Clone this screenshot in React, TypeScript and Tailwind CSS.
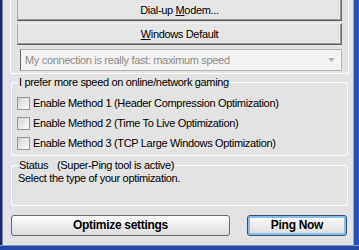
import { useState } from "react";

const methods = [
  "Enable Method 1 (Header Compression Optimization)",
  "Enable Method 2 (Time To Live Optimization)",
  "Enable Method 3 (TCP Large Windows Optimization)",
];

const bg = "bg-[#e3e3e3]";

function ClassicButton({ children, className }: { children: React.ReactNode; className?: string }) {
  return (
    <div
      className={`h-[22px] flex items-center justify-center bg-[#e6e6e6] border border-t-[#f4f4f4] border-l-[#a8a8a8] border-r-[#6c6c6c] border-b-[#5c5c5c] shadow-[inset_-1px_-1px_0_#9a9a9a] ${className ?? ""}`}
    >
      {children}
    </div>
  );
}

function CheckRow({ label, checked, onToggle }: { label: string; checked: boolean; onToggle: () => void }) {
  return (
    <div className="flex items-center h-[13px] cursor-default" onClick={onToggle}>
      <div className="w-[13px] h-[13px] border border-[#969696] bg-gradient-to-br from-[#d6d6d6] to-[#fbfbfb] flex items-center justify-center">
        {checked && (
          <svg width="9" height="9" viewBox="0 0 9 9">
            <path d="M1 4 L3.5 6.5 L8 1.5" stroke="#21a121" strokeWidth="2" fill="none" />
          </svg>
        )}
      </div>
      <span className="ml-[3px] leading-[13px]">{label}</span>
    </div>
  );
}

export default function App() {
  const [checks, setChecks] = useState([false, false, false]);

  function toggle(i: number) {
    setChecks((c) => c.map((v, j) => (j == i ? !v : v)));
  }

  return (
    <div
      className={`w-[359px] h-[250px] overflow-hidden flex flex-col ${bg} text-black font-['Liberation_Sans',Arial,sans-serif] text-[11px] tracking-[-0.33px] leading-[13px]`}
    >
      <div className="flex-1 flex">
        {/* left window frame */}
        <div className="w-[3px] border-l-2 border-[#1c2866] bg-[#7f8ab4]" />

        <div className="flex-1 flex flex-col">
          {/* connection type box */}
          <div className="-mt-[1px] ml-[7px] w-[339px] border-x border-b border-white rounded-b-[3px] px-[6px] pb-[2px] flex flex-col">
            <ClassicButton>
              <span>
                Dial-up <span className="underline underline-offset-1">M</span>odem...
              </span>
            </ClassicButton>
            <ClassicButton className="mt-[2px]">
              <span>
                <span className="underline underline-offset-1">W</span>indows Default
              </span>
            </ClassicButton>
            <div className="mt-[4px] ml-[3px] h-[22px] border border-[#b4b4b4] border-l-[#6a6a6a] bg-[#f3f3f3] flex items-center pl-[4px] pr-[6px]">
              <span className="flex-1 text-[#8c8c8c]">My connection is really fast: maximum speed</span>
              <svg width="7" height="4" viewBox="0 0 7 4">
                <path d="M0 0 H7 L3.5 4 Z" fill="#b4b4b4" />
              </svg>
            </div>
          </div>

          {/* methods group */}
          <div className="mt-[8px] ml-[8px] w-[337px] border border-white rounded-[3px] pl-[5px] pb-[5px]">
            <div className={`-mt-[7px] ml-[1px] px-[1px] w-fit ${bg}`}>I prefer more speed on online/network gaming</div>
            <div className="mt-[8px] flex flex-col gap-[7px]">
              {methods.map((m, i) => (
                <CheckRow key={i} label={m} checked={checks[i]} onToggle={() => toggle(i)} />
              ))}
            </div>
          </div>

          {/* status group */}
          <div className="mt-[9px] ml-[8px] w-[337px] border border-white rounded-[3px] pl-[6px] pb-[20px]">
            <div className={`-mt-[7px] px-[1px] w-fit flex ${bg}`}>
              <span className="w-[38px]">Status</span>
              <span>(Super-Ping tool is active)</span>
            </div>
            <div>Select the type of your optimization.</div>
          </div>

          {/* bottom buttons */}
          <div className="mt-[9px] ml-[8px] flex gap-[17px] font-bold text-[12px] tracking-[-0.3px]">
            <div className="w-[219px] h-[21px] rounded-[3px] border border-[#6a6a6a] bg-gradient-to-b from-[#fdfdfd] to-[#dcdcdc] flex items-center justify-center">
              Optimize settings
            </div>
            <div className="w-[100px] h-[21px] rounded-[3px] border border-[#34506e] bg-gradient-to-b from-[#fdfdfd] to-[#dcdcdc] shadow-[inset_0_0_0_2px_#86bdea] flex items-center justify-center">
              Ping Now
            </div>
          </div>
        </div>

        {/* right window frame */}
        <div className="w-[6px] border-l border-[#95a6d6] bg-[#2552bd]" />
      </div>
      {/* bottom window frame */}
      <div className="h-[5px] border-t border-[#8496c8] bg-[#2449a8]" />
    </div>
  );
}
